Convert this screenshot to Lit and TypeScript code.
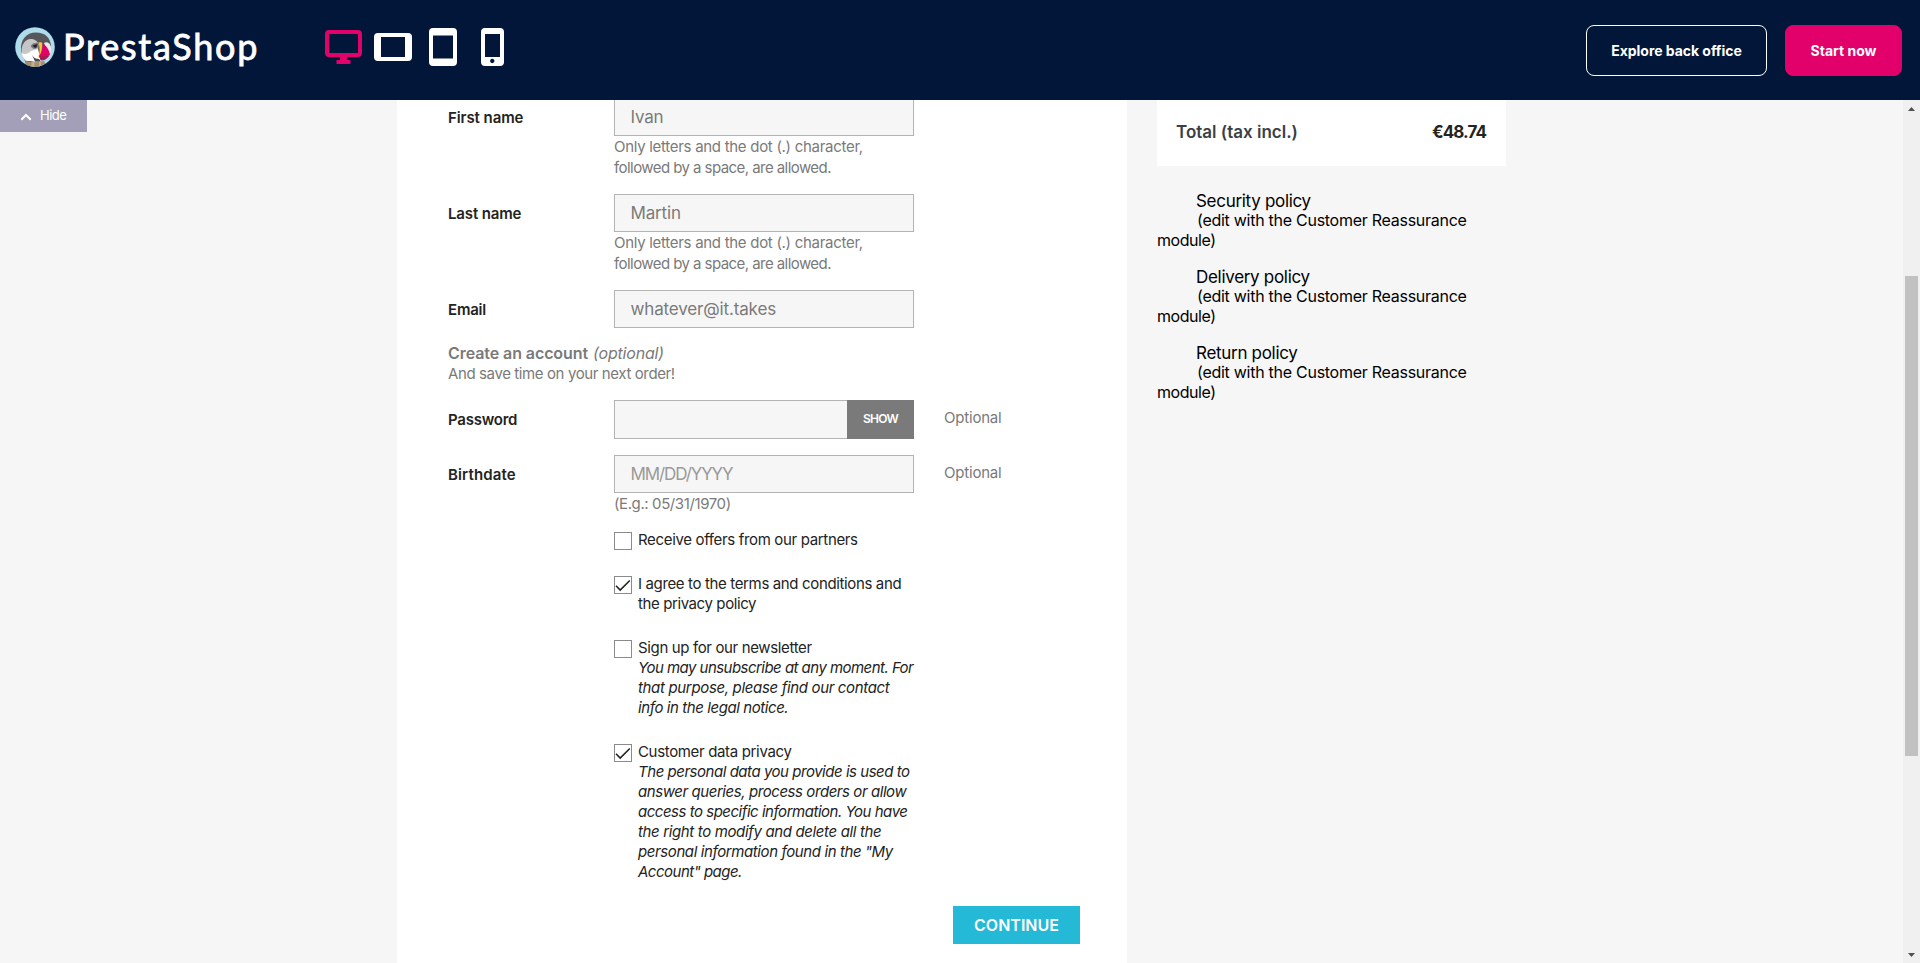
import { LitElement, html, css, svg, nothing } from "lit";
import { classMap } from "lit/directives/class-map.js";
import { styleMap } from "lit/directives/style-map.js";

/** One line of copy with its tracking in pixels. */
type Line = [text: string, tracking: number];

const line = ([text, tracking]: Line) =>
  html`<span class="line" style=${styleMap({ letterSpacing: `${tracking}px` })}>${text}</span>`;

interface Consent {
  checked: boolean;
  title: Line[];
  note?: Line[];
}

const nameHint: Line[] = [
  ["Only letters and the dot (.) character,", -0.29],
  ["followed by a space, are allowed.", -0.56],
];

const consents: Consent[] = [
  { checked: false, title: [["Receive offers from our partners", -0.34]] },
  {
    checked: true,
    title: [
      ["I agree to the terms and conditions and", -0.36],
      ["the privacy policy", -0.4],
    ],
  },
  {
    checked: false,
    title: [["Sign up for our newsletter", -0.36]],
    note: [
      ["You may unsubscribe at any moment. For", -0.54],
      ["that purpose, please find our contact", -0.34],
      ["info in the legal notice.", -0.42],
    ],
  },
  {
    checked: true,
    title: [["Customer data privacy", -0.34]],
    note: [
      ["The personal data you provide is used to", -0.47],
      ["answer queries, process orders or allow", -0.43],
      ["access to specific information. You have", -0.48],
      ["the right to modify and delete all the", -0.36],
      ["personal information found in the \"My", -0.4],
      ["Account\" page.", -0.5],
    ],
  },
];

const policies = ["Security policy", "Delivery policy", "Return policy"];

class DemoHeader extends LitElement {
  static styles = css`
    :host {
      display: flex;
      align-items: flex-start;
      height: 100px;
      box-sizing: border-box;
      padding: 0 18px 0 15px;
      background: #011638;
      color: #fff;
      font-family: Inter, sans-serif;
    }
    .brand {
      display: flex;
      align-items: flex-start;
      gap: 8px;
      width: 310px;
      margin-top: 27px;
    }
    .wordmark {
      margin-top: -4px;
      font: 400 36px/46px Lato, sans-serif;
      letter-spacing: 1.75px;
      -webkit-text-stroke: 0.8px #fff;
    }
    .devices {
      display: block;
      margin-top: 22px;
    }
    .actions {
      display: flex;
      gap: 18px;
      margin: 25px 0 0 auto;
    }
    .button {
      box-sizing: border-box;
      height: 51px;
      border: 1px solid #fff;
      border-radius: 8px;
      font-size: 14px;
      font-weight: 700;
      line-height: 50px;
      text-align: center;
      white-space: nowrap;
      width: 181px;
      letter-spacing: -0.04px;
    }
    .primary {
      width: 117px;
      border-color: #e2006a;
      background: #e2006a;
      letter-spacing: 0;
    }
  `;

  render() {
    return html`
      <div class="brand">
        ${this.logo()}
        <span class="wordmark">PrestaShop</span>
      </div>
      ${this.devices()}
      <div class="actions">
        <div class="button">Explore back office</div>
        <div class="button primary">Start now</div>
      </div>
    `;
  }

  private logo() {
    return html`<svg width="40" height="40" viewBox="0 0 40 40">
      <defs><clipPath id="disc"><circle cx="20" cy="20" r="19.8" /></clipPath></defs>
      <g clip-path="url(#disc)">
        <rect width="40" height="40" fill="#aedcea" />
        <path d="M6 24C5 13 11 5.500 21 5.500c9 0 14 5 15 13l-3 11-22 7z" fill="#56575b" />
        <path d="M6.500 24c0-7 4-12 9-12 4 0 7 2 8 5l-1 12-12 5c-2-2-4-6-4-10z" fill="#c6c6c8" />
        <path d="M7 26c2 2 6 1 9-2l7-2 2 8 2 4H12c-3-2-5-5-5-8z" fill="#fff" />
        <path d="M29 16c3-2 6 0 7 4v6l-3 1z" fill="#e9e9ea" />
        <path d="M15.500 19c2-3 5-4 8-3l-1 5c-3 1.500-5 1-7-2z" fill="#77787b" />
        <path d="M17.500 18.500l5-1.500-1 3.500c-2 .5-3-.5-4-2z" fill="#232326" />
        <path d="M23.500 15.500c2-.5 3.500 0 4 1l-1.500 12-3 2c2-4 2-10 .5-15z" fill="#fdc232" />
        <path d="M27.500 16c4 3 7 7 7.500 12l-9.500 4c-1-1-1.500-2-1.500-3 3-4 4-8 3.500-13z" fill="#e2006a" />
        <path d="M25 29.500l9.500-1c-2 3-5 5-8.500 5-1-1-1.300-2.500-1-4z" fill="#a01c52" />
        <path d="M17 28c2 3 4 4 7 4l2 2.500h-6z" fill="#4b4b50" />
        <path d="M10.500 34c6 1.500 13 1.500 19 0l1 6h-20z" fill="#a58d70" />
        <path d="M16.500 34.800h3V40h-3zM24 34.800h2V40h-2z" fill="#c1ac8d" />
      </g>
    </svg>`;
  }

  private devices() {
    return html`<svg class="devices" width="180" height="46" viewBox="325 22 180 46" fill="none">
      ${svg`
        <rect x="327" y="32" width="33" height="23" rx="2" stroke="#e2006a" stroke-width="4" />
        <path d="M340 56h7v4h3.500v4h-14v-4h3.500z" fill="#e2006a" />
        <path fill-rule="evenodd" fill="#fff" d="M378 33h30a4 4 0 0 1 4 4v20a4 4 0 0 1-4 4h-30a4 4 0 0 1-4-4V37a4 4 0 0 1 4-4zM381 37v20h24V37z" />
        <path fill-rule="evenodd" fill="#fff" d="M433 28h20a4 4 0 0 1 4 4v30a4 4 0 0 1-4 4h-20a4 4 0 0 1-4-4V32a4 4 0 0 1 4-4zM433 35.500v23h20v-23z" />
        <path fill-rule="evenodd" fill="#fff" d="M485 28h15a4 4 0 0 1 4 4v30a4 4 0 0 1-4 4h-15a4 4 0 0 1-4-4V32a4 4 0 0 1 4-4zM485 34v23h15V34zM492.200 58.800a2.200 2.200 0 1 0 .1 0z" />
      `}
    </svg>`;
  }
}
customElements.define("demo-header", DemoHeader);

class CheckoutForm extends LitElement {
  static styles = css`
    :host {
      display: block;
      box-sizing: border-box;
      height: 863px;
      overflow: hidden;
      padding: 0 47px 0 51px;
      background: #fff;
      color: #232323;
      font: 400 15px/21px Inter, sans-serif;
    }
    .fields {
      display: flex;
      flex-direction: column;
      margin-top: -2px;
    }
    .row {
      display: grid;
      grid-template-columns: 166px 300px 1fr;
      margin-bottom: 16px;
    }
    .line {
      display: block;
      white-space: nowrap;
    }
    .label {
      padding-top: 9px;
      font-weight: 600;
    }
    .input {
      box-sizing: border-box;
      height: 38px;
      padding-left: 15.500px;
      border: 1px solid #b4b4b4;
      background: #f6f6f6;
      color: #7a7a7a;
      font-size: 17px;
      line-height: 37px;
    }
    .placeholder {
      color: #9a9a9a;
    }
    .hint,
    .account,
    .optional {
      color: #7a7a7a;
    }
    .optional {
      padding: 7px 0 0 30px;
      letter-spacing: -0.2px;
    }
    .secret {
      display: flex;
      height: 39px;
    }
    .secret .input {
      flex: 1;
      height: 39px;
      border-right: 0;
    }
    .show {
      width: 67px;
      background: #7a7a7a;
      color: #fff;
      font-size: 12px;
      font-weight: 600;
      line-height: 37px;
      text-align: center;
      letter-spacing: -0.7px;
    }
    .account {
      margin: -2px 0 16px;
    }
    .account-title {
      display: flex;
      gap: 5px;
      height: 21px;
      font-size: 16px;
      line-height: 22px;
    }
    .account-title b {
      font-weight: 600;
      letter-spacing: -0.08px;
    }
    .account-title i {
      letter-spacing: -0.2px;
    }
    .consents {
      display: flex;
      flex-direction: column;
      gap: 24px;
      margin-left: 166px;
      line-height: 20px;
    }
    .consent {
      display: flex;
      gap: 6px;
    }
    .box {
      box-sizing: border-box;
      width: 18px;
      height: 18px;
      margin-top: 2px;
      border: 1px solid #8a8a8a;
    }
    .box svg {
      display: block;
    }
    .note {
      font-style: italic;
    }
    .continue {
      align-self: flex-end;
      width: 127px;
      height: 38px;
      margin-top: 24px;
      background: #24b9d7;
      color: #fff;
      font-size: 16px;
      font-weight: 600;
      line-height: 38px;
      text-align: center;
    }
  `;

  private field(label: Line, value: Line, hint: Line[] = [], placeholder = false, optional = false) {
    return html`<div class="row">
      <div class="label">${line(label)}</div>
      <div>
        <div class=${classMap({ input: true, placeholder })}>${line(value)}</div>
        <div class="hint">${hint.map(line)}</div>
      </div>
      ${optional ? html`<div class="optional">Optional</div>` : nothing}
    </div>`;
  }

  private consent(c: Consent) {
    return html`<div class="consent">
      <div class="box">
        ${c.checked
          ? html`<svg width="16" height="16" viewBox="0 0 16 16">
              <path d="M1 8.800l4.200 4.200L14.800 3.500" fill="none" stroke="#232323" stroke-width="1.600" />
            </svg>`
          : nothing}
      </div>
      <div>
        ${c.title.map(line)}
        <div class="note">${c.note?.map(line)}</div>
      </div>
    </div>`;
  }

  render() {
    return html`<div class="fields">
      ${this.field(["First name", -0.08], ["Ivan", -0.2], nameHint)}
      ${this.field(["Last name", -0.15], ["Martin", -0.15], nameHint)}
      ${this.field(["Email", -0.2], ["whatever@it.takes", -0.15])}
      <div class="account">
        <div class="account-title"><b>Create an account</b><i>(optional)</i></div>
        ${line(["And save time on your next order!", -0.39])}
      </div>
      <div class="row">
        <div class="label">${line(["Password", -0.25])}</div>
        <div class="secret">
          <div class="input"></div>
          <div class="show">SHOW</div>
        </div>
        <div class="optional">Optional</div>
      </div>
      ${this.field(["Birthdate", 0.15], ["MM/DD/YYYY", -1.1], [["(E.g.: 05/31/1970)", -0.4]], true, true)}
      <div class="consents">${consents.map((c) => this.consent(c))}</div>
      <div class="continue">CONTINUE</div>
    </div>`;
  }
}
customElements.define("checkout-form", CheckoutForm);

class OrderAside extends LitElement {
  static styles = css`
    :host {
      display: block;
      font: 400 17px/20px Inter, sans-serif;
    }
    .total {
      box-sizing: border-box;
      display: flex;
      justify-content: space-between;
      height: 66px;
      padding: 22px 20px 0 19px;
      background: #fff;
      color: #232323;
      font-weight: 600;
    }
    .total-label {
      color: #3b3f45;
    }
    .amount {
      font-weight: 700;
      letter-spacing: -0.91px;
    }
    .policies {
      display: flex;
      flex-direction: column;
      gap: 17px;
      margin-top: 25px;
      color: #000;
      white-space: nowrap;
    }
    .policy-name {
      height: 19px;
      padding-left: 39px;
      letter-spacing: -0.3px;
      line-height: 21px;
    }
    .policy-text {
      text-indent: 40px;
      font-size: 16px;
      letter-spacing: -0.27px;
    }
    .tail {
      display: block;
      text-indent: 0;
      letter-spacing: -0.45px;
    }
  `;

  render() {
    return html`
      <div class="total">
        <span class="total-label">Total (tax incl.)</span>
        <span class="amount">€48.74</span>
      </div>
      <div class="policies">
        ${policies.map(
          (name) => html`<div>
            <div class="policy-name">${name}</div>
            <div class="policy-text">(edit with the Customer Reassurance <span class="tail">module)</span></div>
          </div>`,
        )}
      </div>
    `;
  }
}
customElements.define("order-aside", OrderAside);

class AppRoot extends LitElement {
  static styles = css`
    :host {
      display: block;
      height: 963px;
      overflow: hidden;
      background: #f6f6f6;
      font-family: Inter, sans-serif;
    }
    .page {
      display: grid;
      grid-template-columns: 397px 730px 30px 349px 1fr 17px;
      height: 863px;
    }
    .hide {
      display: flex;
      align-items: center;
      gap: 8px;
      box-sizing: border-box;
      width: 87px;
      height: 32px;
      padding: 0 0 2px 20px;
      background: #a49fb9;
      color: #fff;
      font-size: 13px;
      letter-spacing: -0.5px;
    }
    .hide svg {
      margin-top: 4px;
    }
    .aside {
      grid-column: 4;
    }
    .scrollbar {
      grid-column: 6;
      display: flex;
      flex-direction: column;
      align-items: center;
      background: #f0f0f0;
    }
    .thumb {
      width: 13px;
      height: 480px;
      margin: 159px 0 auto;
      background: #c1c1c1;
    }
  `;

  render() {
    return html`
      <demo-header></demo-header>
      <main class="page">
        <div>
          <div class="hide">
            <svg width="12" height="8" viewBox="0 0 12 8">
              <path d="M1.300 6.700L6 2l4.700 4.700" fill="none" stroke="#fff" stroke-width="2" />
            </svg>
            Hide
          </div>
        </div>
        <checkout-form></checkout-form>
        <order-aside class="aside"></order-aside>
        <div class="scrollbar">
          <svg width="17" height="17" viewBox="0 0 17 17"><path d="M5 11l3.500-4 3.500 4z" fill="#505050" /></svg>
          <div class="thumb"></div>
          <svg width="17" height="17" viewBox="0 0 17 17"><path d="M5 7l3.500 4L12 7z" fill="#505050" /></svg>
        </div>
      </main>
    `;
  }
}
customElements.define("app-root", AppRoot);
